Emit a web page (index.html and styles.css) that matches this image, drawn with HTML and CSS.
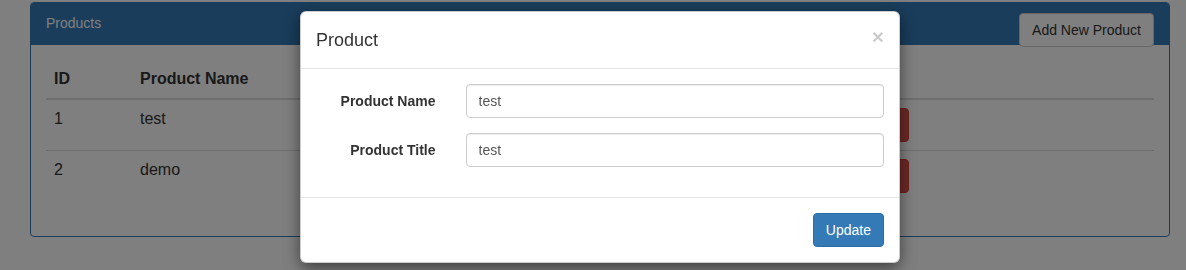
FILE: index.html
```html
<!DOCTYPE html>
<html lang="en">
<head>
<meta charset="utf-8">
<title>Products</title>
<link rel="stylesheet" href="styles.css">
</head>
<body>
<div class="page">
  <div class="panel">
    <div class="panel-heading">
      <button class="btn btn-default pull-right" type="button">Add New Product</button>
      <span class="panel-title">Products</span>
    </div>
    <div class="panel-body">
      <table class="table">
        <thead>
          <tr>
            <th class="c-id">ID</th>
            <th class="c-name">Product Name</th>
            <th class="c-title">Product Title</th>
            <th class="c-act">Action</th>
          </tr>
        </thead>
        <tbody>
          <tr>
            <td>1</td>
            <td>test</td>
            <td>test</td>
            <td><button class="btn btn-primary" type="button">Edit</button> <button class="btn btn-danger" type="button">Delete</button></td>
          </tr>
          <tr>
            <td>2</td>
            <td>demo</td>
            <td>demo</td>
            <td><button class="btn btn-primary" type="button">Edit</button> <button class="btn btn-danger" type="button">Delete</button></td>
          </tr>
        </tbody>
      </table>
    </div>
  </div>
</div>

<div class="modal-backdrop"></div>

<div class="modal-dialog">
  <div class="modal-content">
    <div class="modal-header">
      <button class="close" type="button" aria-label="Close">&times;</button>
      <h4 class="modal-title">Product</h4>
    </div>
    <div class="modal-body">
      <div class="form-group">
        <label class="control-label">Product Name</label>
        <div class="control"><input class="form-control" type="text" value="test"></div>
      </div>
      <div class="form-group">
        <label class="control-label">Product Title</label>
        <div class="control"><input class="form-control" type="text" value="test"></div>
      </div>
    </div>
    <div class="modal-footer">
      <button class="btn btn-primary" type="button">Update</button>
    </div>
  </div>
</div>
</body>
</html>
```

FILE: styles.css
```css
* { box-sizing: border-box; }

html, body {
  margin: 0;
  padding: 0;
  background: #fff;
  font-family: "Liberation Sans", Arial, Helvetica, sans-serif;
  font-size: 14px;
  line-height: 20px;
  color: #333;
  overflow: hidden;
}

.page {
  padding: 2px 0 0 30px;
}

.panel {
  width: 1140px;
  border: 1px solid #337ab7;
  border-radius: 4px;
  background: #fff;
}

.panel-heading {
  background: #337ab7;
  color: #fff;
  padding: 10px 15px;
  border-bottom: 1px solid #337ab7;
  border-radius: 3px 3px 0 0;
  height: 42px;
}

.panel-title {
  font-size: 14px;
}

.pull-right { float: right; }

.btn {
  display: inline-block;
  height: 34px;
  padding: 6px 12px;
  font-family: inherit;
  font-size: 14px;
  line-height: 20px;
  border: 1px solid transparent;
  border-radius: 4px;
  cursor: pointer;
  vertical-align: middle;
}

.btn-default {
  background: #fff;
  border-color: #ccc;
  color: #333;
}

.btn-primary {
  background: #337ab7;
  border-color: #2e6da4;
  color: #fff;
}

.btn-danger {
  background: #d9534f;
  border-color: #d43f3a;
  color: #fff;
}

.panel-body {
  padding: 15px;
}

.table {
  width: 100%;
  border-collapse: collapse;
  table-layout: fixed;
  margin-bottom: 20px;
  font-size: 16px;
  line-height: 22px;
}

.table th {
  text-align: left;
  font-weight: bold;
  padding: 8px;
  border-bottom: 2px solid #ddd;
  vertical-align: bottom;
}

.table td {
  padding: 8px;
  border-top: 1px solid #ddd;
  vertical-align: top;
}

.c-id { width: 86px; }
.c-name { width: 320px; }
.c-title { width: 328px; }

.modal-backdrop {
  position: fixed;
  inset: 0;
  background: rgba(0, 0, 0, 0.5);
}

.modal-dialog {
  position: absolute;
  left: 300px;
  top: 11px;
  width: 600px;
}

.modal-content {
  background: #fff;
  border: 1px solid rgba(0, 0, 0, 0.2);
  border-radius: 6px;
  box-shadow: 0 5px 15px rgba(0, 0, 0, 0.5);
}

.modal-header {
  padding: 15px;
  border-bottom: 1px solid #e5e5e5;
}

.modal-title {
  margin: 0;
  font-size: 18px;
  font-weight: 500;
  line-height: 26px;
  color: #333;
}

.close {
  float: right;
  margin-top: -1px;
  padding: 0;
  background: transparent;
  border: 0;
  font-family: inherit;
  font-size: 21px;
  font-weight: bold;
  line-height: 1;
  color: #000;
  text-shadow: 0 1px 0 #fff;
  opacity: 0.2;
  cursor: pointer;
}

.modal-body {
  padding: 15px 0;
}

.form-group {
  display: grid;
  grid-template-columns: 25% 75%;
  margin-bottom: 15px;
}

.control-label {
  text-align: right;
  font-weight: bold;
  padding: 7px 15px 0;
}

.control {
  padding: 0 15px;
}

.form-control {
  display: block;
  width: 100%;
  height: 34px;
  padding: 6px 12px;
  font-family: inherit;
  font-size: 14px;
  line-height: 20px;
  color: #555;
  background: #fff;
  border: 1px solid #ccc;
  border-radius: 4px;
  box-shadow: inset 0 1px 1px rgba(0, 0, 0, 0.075);
}

.modal-footer {
  padding: 15px;
  border-top: 1px solid #e5e5e5;
  text-align: right;
}
```
